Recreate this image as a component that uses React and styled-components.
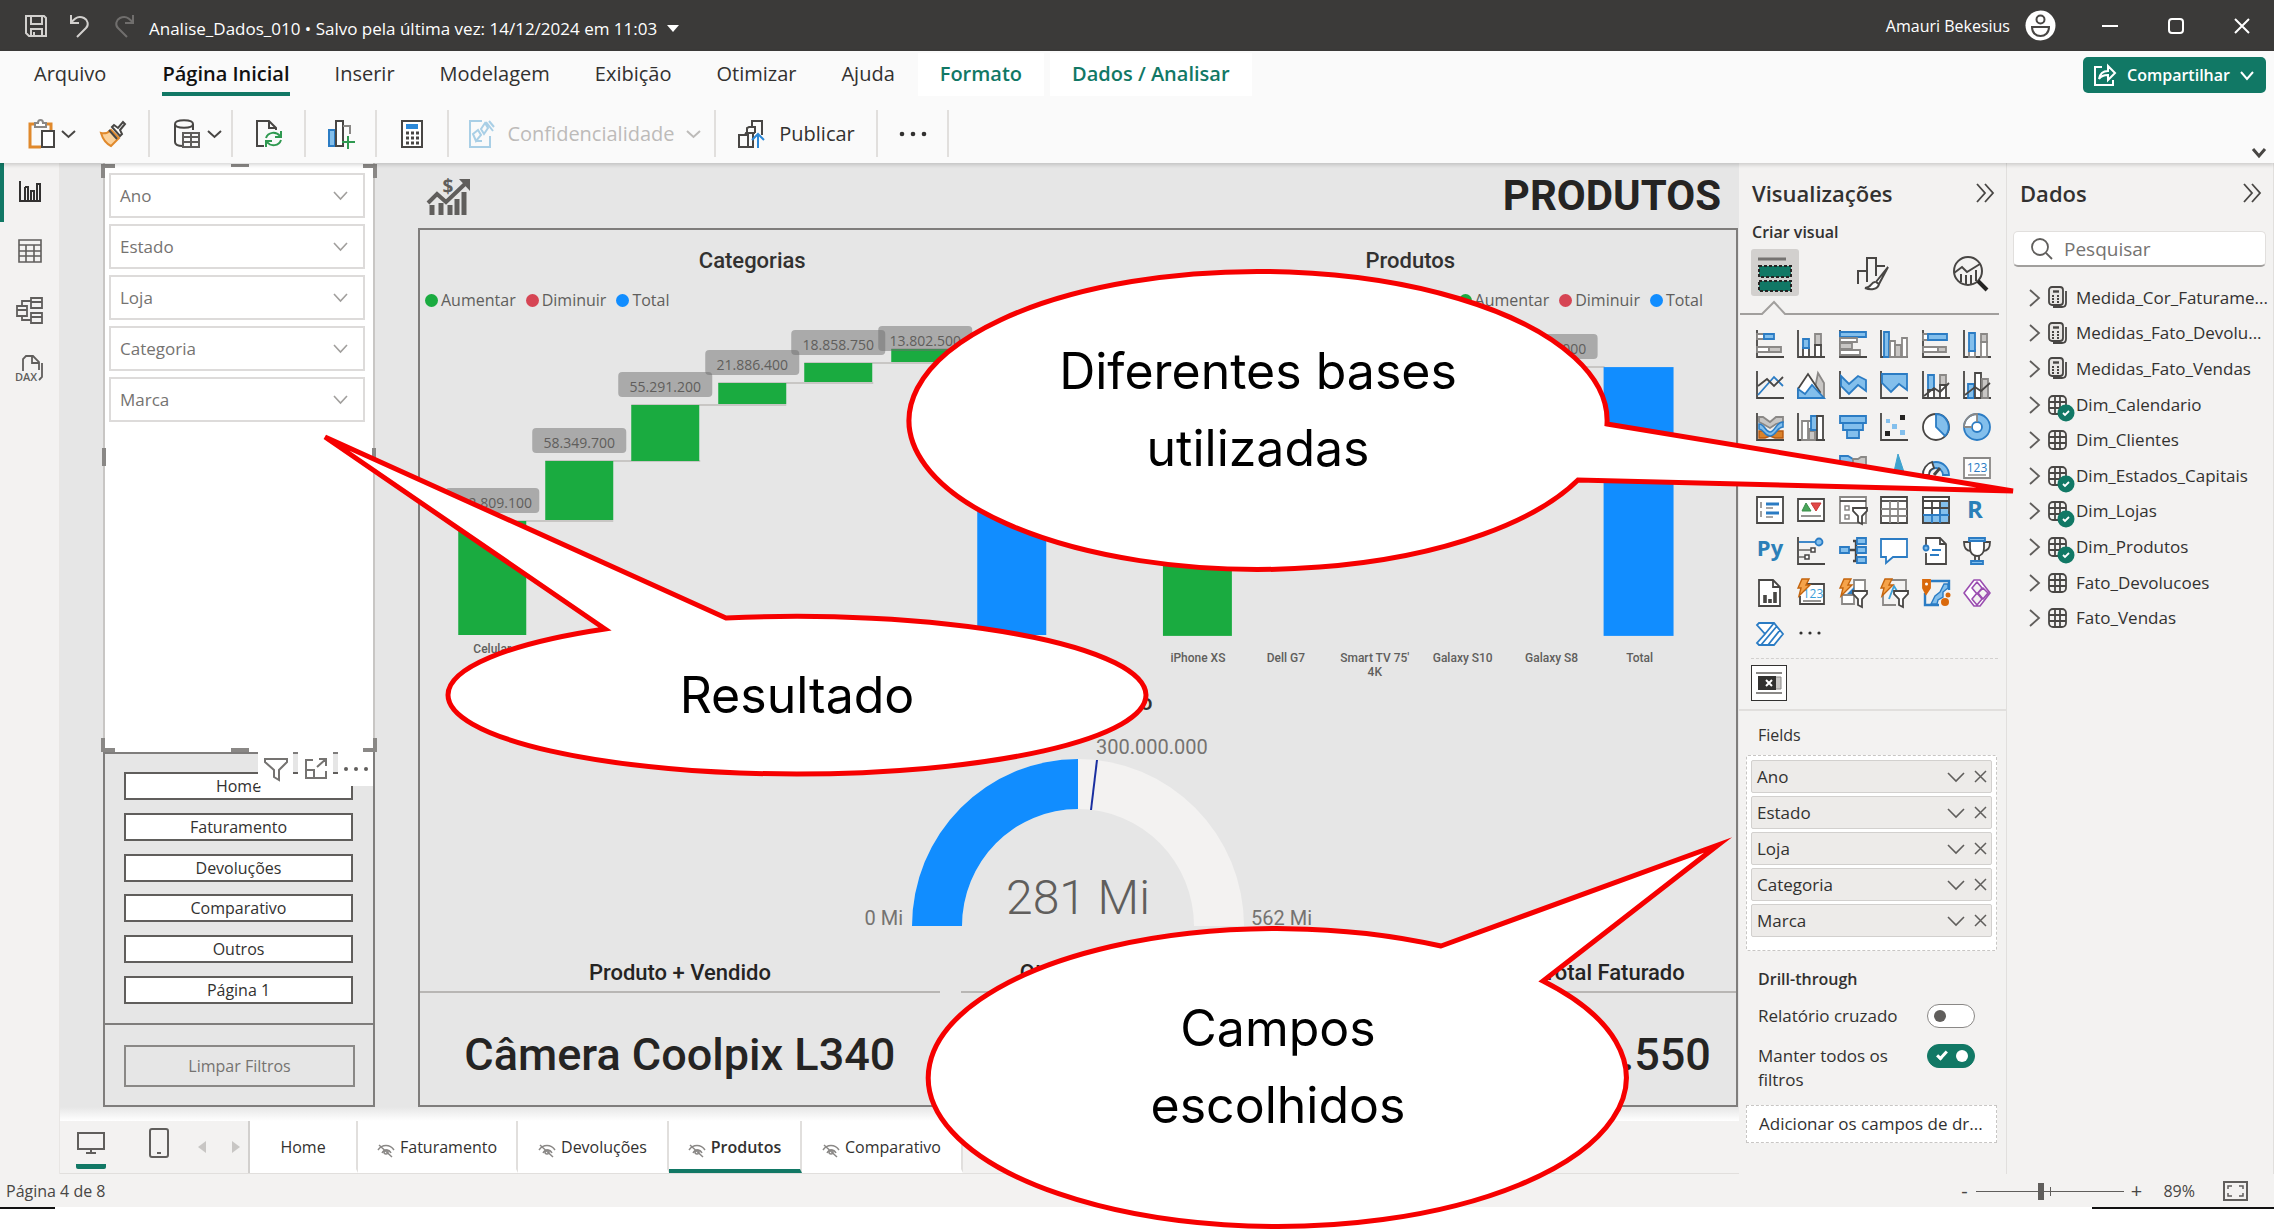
import React from 'react';
import styled, { createGlobalStyle, css } from 'styled-components';

const GlobalStyle = createGlobalStyle`
  *, *::before, *::after {
    box-sizing: border-box;
  }
  body {
    margin: 0;
    background: #fff;
    color: #323130;
    font-family: 'Open Sans', 'Noto Sans', sans-serif;
    font-size: 16px;
    line-height: 24px;
  }
  button, input {
    font: inherit;
    color: inherit;
  }
  button {
    padding: 0;
    border: 0;
    background: none;
  }
  svg {
    display: block;
    flex: none;
    overflow: visible;
  }
`;

const green = '#117865';
const din = "Roboto, 'Open Sans', sans-serif";

/* ---------- shell ---------- */
const Page = styled.div`
  position: relative;
  display: flex;
  flex-direction: column;
  overflow: hidden;
  padding-bottom: 23px;
`;
const TitleBar = styled.header`
  display: flex;
  align-items: center;
  height: 51px;
  padding: 0 24px;
  background: #3b3a39;
  color: #fff;
  font-size: 16px;
`;
const QuickButton = styled.button`
  display: flex;
  margin-right: 20px;
  opacity: ${({ dim }) => (dim ? 0.35 : 1)};
`;
const FileName = styled.button`
  display: flex;
  align-items: center;
  gap: 10px;
  margin-left: -7px;
  padding-top: 6px;
  font-size: 17px;
`;
const UserName = styled.span`
  margin-left: auto;
`;
const Avatar = styled.button`
  display: flex;
  margin: 0 46px 0 15px;
`;
const WindowButton = styled.button`
  display: flex;
  margin-left: ${({ first }) => (first ? 0 : 50)}px;
`;

/* ---------- ribbon ---------- */
const Ribbon = styled.div`
  position: relative;
  z-index: 1;
  background: #fafafa;
  box-shadow: 0 2px 4px rgba(0, 0, 0, 0.16);
  height: 112px;
`;
const TabRow = styled.nav`
  display: flex;
  align-items: flex-start;
  padding: 2px 8px 0 12px;
`;
const RibbonTab = styled.button`
  height: 43px;
  margin-right: ${({ context }) => (context ? 6 : 1)}px;
  padding: 0 22px;
  font-size: 20px;
  ${({ context }) =>
    context &&
    css`
      background: #fff;
      color: ${green};
      font-weight: 600;
    `}
  ${({ active }) =>
    active &&
    css`
      color: #111;
      font-weight: 600;
    `}
  &:first-child {
    margin-right: 12px;
  }
  span {
    display: block;
    height: 43px;
    line-height: 42px;
    border-bottom: 4px solid ${({ active }) => (active ? green : 'transparent')};
  }
`;
const ShareButton = styled.button`
  display: flex;
  align-items: center;
  justify-content: space-between;
  width: 183px;
  height: 36px;
  margin: 4px 0 0 auto;
  padding: 0 12px 0 10px;
  border-radius: 5px;
  background: ${green};
  color: #fff;
  font-weight: 600;
  font-size: 16px;
`;
const ToolRow = styled.div`
  display: flex;
  align-items: center;
  height: 47px;
  margin-top: 14px;
`;
const ToolGroup = styled.div`
  display: flex;
  align-items: center;
  justify-content: center;
  gap: ${({ gap }) => gap || 6}px;
  width: ${({ w }) => w}px;
  height: 47px;
  padding-left: ${({ pad }) => pad || 0}px;
  border-right: 2px solid #e1dfdd;
`;
const ToolButton = styled.button`
  display: flex;
  align-items: center;
  gap: ${({ gap }) => gap || 6}px;
  font-size: 20px;
  &:disabled {
    color: #bdbbb9;
  }
`;
const Collapse = styled.button`
  margin: 38px 8px 0 auto;
`;

/* ---------- body ---------- */
const Body = styled.div`
  display: flex;
`;
const Rail = styled.nav`
  width: 60px;
  background: #f3f2f1;
  border-right: 1px solid #e8e6e4;
`;
const RailButton = styled.button`
  display: flex;
  align-items: center;
  justify-content: center;
  width: 100%;
  height: 59px;
  padding: 0 4px 2px 0;
  border-left: 4px solid ${({ active }) => (active ? green : 'transparent')};
`;
const Center = styled.main`
  flex: 1;
  min-width: 0;
  display: flex;
  flex-direction: column;
`;
const Report = styled.div`
  flex: 1;
  display: flex;
  gap: 43px;
  padding: 0 1px 14px 43px;
  background: linear-gradient(#e6e6e6 calc(100% - 14px), #fff);
`;
const Side = styled.aside`
  display: flex;
  flex-direction: column;
  width: 272px;
`;
const SlicerPanel = styled.section`
  position: relative;
  display: flex;
  flex-direction: column;
  gap: 6px;
  height: 589px;
  padding: 10px 8px 0 4px;
  background: #fff;
  border: solid #c8c6c4;
  border-width: 0 2px;
`;
const Slicer = styled.button`
  display: flex;
  align-items: center;
  justify-content: space-between;
  height: 45px;
  padding: 0 15px 0 9px;
  border: 2px solid #dddbda;
  color: #757371;
  font-size: 17px;
`;
const Handle = styled.i`
  position: absolute;
  background: #8a8886;
  width: ${({ w }) => w}px;
  height: ${({ h }) => h}px;
  ${({ at }) => at}
`;
const Corner = styled.i`
  position: absolute;
  width: 14px;
  height: 14px;
  border: 0 solid #8a8886;
  ${({ top }) => (top ? 'top: 1px; border-top-width: 4px;' : 'bottom: 0; border-bottom-width: 4px;')}
  ${({ left }) => (left ? 'left: -4px; border-left-width: 4px;' : 'right: -4px; border-right-width: 4px;')}
`;
const VisualHeader = styled.div`
  position: absolute;
  z-index: 1;
  right: 0;
  bottom: -34px;
  display: flex;
  gap: 5px;
`;
const HeaderButton = styled.button`
  display: flex;
  align-items: center;
  justify-content: center;
  width: 35px;
  height: 34px;
  background: #fff;
`;
const NavPanel = styled.section`
  flex: 1;
  display: flex;
  flex-direction: column;
  justify-content: space-between;
  padding: 18px 20px 19px 19px;
  border: 2px solid #7f7d7c;
`;
const NavButton = styled.button`
  height: 28px;
  border: 2px solid #605e5c;
  background: #fff;
  line-height: 22px;
`;
const ClearPanel = styled.section`
  display: grid;
  padding: 20px 18px 18px 19px;
  border: 2px solid #7f7d7c;
  border-top: 0;
`;
const ClearButton = styled.button`
  height: 42px;
  border: 2px solid #8a8886;
  color: #757371;
`;

const Board = styled.div`
  flex: 1;
  min-width: 0;
  display: flex;
  flex-direction: column;
`;
const BoardHead = styled.div`
  display: flex;
  align-items: center;
  justify-content: space-between;
  height: 65px;
  padding: 0 17px 0 8px;
`;
const BoardTitle = styled.h1`
  margin: 0;
  color: #252423;
  font: 700 42px/60px ${din};
`;
const Frame = styled.div`
  flex: 1;
  border: 2px solid #7f7d7c;
`;
const Charts = styled.div`
  display: grid;
  grid-template-columns: 51fr 50fr;
`;
const ChartTitle = styled.h2`
  margin: 0;
  color: #323130;
  text-align: center;
  font: 500 22px/24px ${din};
`;
const Chart = styled.section`
  padding-top: 19px;
`;
const Legend = styled.ul`
  display: flex;
  justify-content: ${({ end }) => (end ? 'flex-end' : 'flex-start')};
  gap: 10px;
  margin: 15px 0 0;
  padding: 0 ${({ end }) => (end ? 33 : 5)}px;
  list-style: none;
  color: #605e5c;
`;
const LegendItem = styled.li`
  display: flex;
  align-items: center;
  gap: 3px;
  &::before {
    content: '';
    width: 13px;
    height: 13px;
    border-radius: 50%;
    background: ${({ color }) => color};
  }
`;
const ChartSvg = styled.svg`
  width: 100%;
  height: 368px;
  text {
    font-family: 'Open Sans', sans-serif;
    font-size: 14px;
    fill: #605e5c;
    text-anchor: middle;
  }
  .axis {
    font: 500 12px ${din};
  }
`;
const GaugeBox = styled.section`
  padding-top: 11px;
`;
const GaugeSvg = styled.svg`
  margin: 5px auto 0;
  text {
    font: 400 20px ${din};
    fill: #757371;
  }
  .value {
    font: 300 48px ${din};
    fill: #605e5c;
    text-anchor: middle;
  }
`;
const Cards = styled.div`
  display: grid;
  grid-template-columns: 521fr 245fr 245fr 245fr;
  gap: 21px;
  margin-top: 25px;
`;
const CardTitle = styled.h2`
  margin: 0;
  padding-bottom: 6px;
  border-bottom: 2px solid #b8b6b4;
  color: #252423;
  text-align: center;
  font: 500 22px/24px ${din};
`;
const CardValue = styled.p`
  margin: 0;
  padding: 32px 0 20px;
  color: #252423;
  text-align: center;
  white-space: nowrap;
  font: 500 45px/60px ${din};
`;

/* ---------- page tabs ---------- */
const PageTabs = styled.nav`
  display: flex;
  height: 53px;
  background: #f3f2f1;
  border-bottom: 1px solid #e1dfdd;
`;
const Devices = styled.div`
  display: flex;
  align-items: center;
  width: 190px;
  padding-left: 16px;
  border-right: 2px solid #d2d0ce;
`;
const Device = styled.button`
  display: flex;
  align-items: center;
  justify-content: center;
  width: 35px;
  height: 43px;
  margin-right: ${({ active }) => (active ? 43 : 29)}px;
  padding-bottom: 3px;
  border-bottom: 5px solid ${({ active }) => (active ? green : 'transparent')};
  border-radius: 2px;
`;
const Arrow = styled.button`
  width: 8px;
  margin-right: 26px;
`;
const PageTab = styled.button`
  display: flex;
  align-items: center;
  justify-content: center;
  gap: 5px;
  width: ${({ w }) => w}px;
  padding-top: 4px;
  background: #fff;
  border-right: 2px solid #e1dfdd;
  border-bottom: 4px solid ${({ active }) => (active ? green : '#fff')};
  font-weight: ${({ active }) => (active ? 600 : 400)};
  svg {
    margin-top: 8px;
  }
`;

/* ---------- panes ---------- */
const Pane = styled.aside`
  width: ${({ w }) => w}px;
  background: #f3f2f1;
  border-right: 1px solid #e1dfdd;
  font-size: 17px;
`;
const PaneHead = styled.div`
  display: flex;
  align-items: center;
  justify-content: space-between;
  height: 60px;
  padding: 0 11px 0 13px;
`;
const PaneTitle = styled.h2`
  margin: 0;
  font-size: 22px;
  font-weight: 600;
  line-height: 28px;
`;
const Subtitle = styled.h3`
  margin: ${({ drill }) => (drill ? '16px 0 0 19px' : '-3px 0 0 13px')};
  font-size: 16px;
  font-weight: 600;
  line-height: 24px;
`;
const Modes = styled.div`
  display: flex;
  justify-content: space-between;
  padding: 5px 11px 0 12px;
`;
const Mode = styled.button`
  display: flex;
  align-items: center;
  justify-content: center;
  width: 48px;
  height: 47px;
  border-radius: 3px;
  background: ${({ active }) => (active ? '#d2d0ce' : 'none')};
`;
const Notch = styled.svg`
  margin-top: 5px;
`;
const VisualGrid = styled.div`
  display: grid;
  grid-template-columns: repeat(6, 28px);
  justify-content: space-between;
  align-content: space-between;
  height: 318px;
  margin: 15px 15px 0 17px;
`;
const VisualButton = styled.button`
  width: 28px;
  height: 28px;
`;
const Custom = styled.div`
  margin-top: 10px;
  padding: 7px 0 8px 12px;
  border-bottom: 2px solid #e1dfdd;
  &::before {
    content: '';
    display: block;
    margin: -7px 8px 6px 0;
    border-top: 1px dashed #d2d0ce;
  }
`;
const CustomButton = styled.button`
  display: flex;
  align-items: center;
  justify-content: center;
  width: 36px;
  height: 36px;
  border: 1px solid #323130;
  background: #fff;
`;
const FieldsTitle = styled.h3`
  margin: 12px 0 8px 19px;
  font-size: 16px;
  font-weight: 400;
`;
const Well = styled.div`
  display: flex;
  flex-direction: column;
  gap: 3px;
  margin: 0 9px 0 7px;
  padding: 4px 4px 13px;
  border: 1px dashed #c8c6c4;
  border-radius: 2px;
  background: #fff;
`;
const Field = styled.div`
  display: flex;
  align-items: center;
  gap: 9px;
  height: 33px;
  padding: 0 4px 0 5px;
  border: 1px solid #d2d0ce;
  border-radius: 2px;
  background: #edebe9;
  span {
    flex: 1;
  }
`;
const SwitchRow = styled.label`
  display: flex;
  align-items: flex-start;
  justify-content: space-between;
  padding: ${({ first }) => (first ? 13 : 16)}px 31px 0 19px;
  span {
    width: 150px;
    white-space: ${({ first }) => (first ? 'nowrap' : 'normal')};
  }
`;
const Switch = styled.input`
  appearance: none;
  position: relative;
  width: 48px;
  height: 24px;
  margin: 0;
  border: 1px solid #8a8886;
  border-radius: 12px;
  background: #fff;
  &::before {
    content: '';
    position: absolute;
    top: 5px;
    left: 6px;
    width: 12px;
    height: 12px;
    border-radius: 50%;
    background: #605e5c;
  }
  &:checked {
    border-color: ${green};
    background: ${green};
  }
  &:checked::before {
    left: 28px;
    background: #fff;
  }
  &:checked::after {
    content: '';
    position: absolute;
    top: 4px;
    left: 11px;
    width: 6px;
    height: 11px;
    border: solid #fff;
    border-width: 0 3px 3px 0;
    transform: rotate(42deg);
  }
`;
const DropHere = styled.div`
  margin: 13px 9px 30px 7px;
  padding: 6px 12px;
  border: 1px dashed #c8c6c4;
  background: #fff;
  white-space: nowrap;
`;
const Search = styled.label`
  display: flex;
  align-items: center;
  gap: 9px;
  height: 36px;
  margin: 8px 7px 0 6px;
  padding-left: 17px;
  border: 1px solid #e1dfdd;
  border-bottom: 2px solid #a19f9d;
  border-radius: 5px;
  background: #fff;
  input {
    width: 100%;
    min-width: 0;
    border: 0;
    outline: 0;
    background: none;
    font-size: 19px;
  }
  input::placeholder {
    color: #757371;
    opacity: 1;
  }
`;
const Tables = styled.ul`
  display: flex;
  flex-direction: column;
  height: 356px;
  margin: 13px 0 0;
  padding: 0 0 0 22px;
  list-style: none;
`;
const TableItem = styled.li`
  flex: 1;
  display: flex;
`;
const TableButton = styled.button`
  display: flex;
  align-items: center;
  gap: 8px;
  width: 100%;
  text-align: left;
  white-space: nowrap;
`;

/* ---------- status ---------- */
const Status = styled.footer`
  display: flex;
  align-items: center;
  height: 33px;
  padding: 1px 26px 0 6px;
  background: #f3f2f1;
  color: #484644;
`;
const Zoom = styled.div`
  display: flex;
  align-items: center;
  gap: 6px;
  margin-left: auto;
  font-size: 16px;
`;
const Slider = styled.input`
  appearance: none;
  width: 148px;
  height: 18px;
  margin: 0;
  background: linear-gradient(#605e5c, #605e5c) center / 100% 1px no-repeat,
    linear-gradient(#605e5c, #605e5c) center / 1px 9px no-repeat;
  &::-webkit-slider-thumb {
    appearance: none;
    width: 6px;
    height: 17px;
    background: #605e5c;
  }
`;
const SignButton = styled.button`
  width: 12px;
  font-size: 20px;
  line-height: 20px;
`;
const Percent = styled.output`
  margin: 0 22px 0 15px;
`;
const Edge = styled.div`
  display: flex;
  justify-content: space-between;
  &::before,
  &::after {
    content: '';
    width: 55px;
    height: 2px;
    background: #111;
  }
  &::after {
    width: 182px;
  }
`;

/* ---------- callouts ---------- */
const CalloutBox = styled.div`
  position: absolute;
  z-index: 2;
  left: ${({ x }) => x}px;
  top: ${({ y }) => y}px;
  width: 698px;
  height: ${({ h }) => h}px;
  display: flex;
  align-items: center;
  justify-content: center;
  padding: ${({ tall }) => (tall ? '0 140px 22px' : '0')};
  text-align: center;
  color: #000;
  font: 400 50px/77px Inter, 'Open Sans', sans-serif;
  svg {
    position: absolute;
    inset: 0;
  }
  p {
    position: relative;
    margin: 0;
  }
`;

const Callout = ({ x, y, h, d, tall, children }) => (
  <CalloutBox x={x} y={y} h={h} tall={tall}>
    <svg width="698" height={h}>
      <path d={d} fill="#fff" stroke="#f60000" strokeWidth="5" strokeMiterlimit="8" />
    </svg>
    <p>{children}</p>
  </CalloutBox>
);

/* ---------- icons ---------- */
const Svg = ({ s = 28, w, h, box, children, ...rest }) => (
  <svg
    width={w || s}
    height={h || s}
    viewBox={box || `0 0 ${w || s} ${h || s}`}
    fill="none"
    stroke="#484644"
    strokeWidth="2"
    aria-hidden="true"
    {...rest}
  >
    {children}
  </svg>
);
const Chevron = ({ w = 15, h = 8, ...rest }) => (
  <Svg w={w} h={h} {...rest}>
    <path d={`M1 1L${w / 2} ${h - 1}L${w - 1} 1`} />
  </Svg>
);
const Chevrons = () => (
  <Svg w={20} h={20} strokeWidth="1.8">
    <path d="M2 1l8 9-8 9M10 1l8 9-8 9" />
  </Svg>
);
const Cross = () => (
  <Svg s={13} strokeWidth="1.5" stroke="#605e5c">
    <path d="M1 1l11 11M12 1L1 12" />
  </Svg>
);
const K = '#484644';
const B = '#2b7cc4';
const F = '#83bfec';
const G = '#c8c6c4';
const P = '#8a8886';
const O = '#d9822b';
const Axis = () => <path d="M1 0v27h27" />;
const Bolt = () => <path d="M5 0h7L9 6h4L2 17l2-8H1z" fill="#f5a34a" stroke="#c4640c" strokeWidth="1.4" />;
const Funnel = () => <path d="M14 12h14v3l-5 5v8l-4-2v-6l-5-5z" fill="#fff" stroke={K} strokeWidth="1.8" />;

const visuals = [
  ['Barras empilhadas', <><Axis /><path d="M1 4h7v5H1zM1 17h12v5H1z" fill="#fff" stroke={P} /><path d="M8 4h10v5H8z" fill={F} stroke={B} /><path d="M13 17h12v5H13z" fill={G} stroke={P} /></>],
  ['Colunas empilhadas', <><Axis /><path d="M6 18h6v9H6z" fill="#fff" /><path d="M6 9h6v9H6z" fill={F} stroke={B} /><path d="M18 4h6v11h-6z" fill={G} stroke={P} /><path d="M18 15h6v12h-6z" fill="#fff" /></>],
  ['Barras clusterizadas', <><Axis /><path d="M1 2h26v5H1z" fill={F} stroke={B} /><path d="M1 8h17v4H1zM1 20h20v5H1z" fill="#fff" stroke={P} /><path d="M1 13h12v6H1z" fill={G} stroke={P} /></>],
  ['Colunas clusterizadas', <><Axis /><path d="M4 2h5v25H4z" fill={F} stroke={B} /><path d="M10 11h5v16h-5zM22 8h5v19h-5z" fill="#fff" stroke={P} /><path d="M15 15h6v12h-6z" fill={G} stroke={P} /></>],
  ['Barras 100%', <><Axis /><path d="M1 4h5v6H1zM1 17h15v5H1z" fill="#fff" stroke={P} /><path d="M6 4h19v6H6z" fill={F} stroke={B} /><path d="M16 17h8v5h-8z" fill={G} stroke={P} /></>],
  ['Colunas 100%', <><Axis /><path d="M6 20h6v7H6zM18 12h6v15h-6z" fill="#fff" stroke={P} /><path d="M6 3h6v18H6z" fill={F} stroke={B} /><path d="M18 4h6v8h-6z" fill={G} stroke={P} /></>],
  ['Linhas', <><Axis /><path d="M2 24L18 6l9 9" stroke={B} /><path d="M2 15l9-7 7 7 9-9" /></>],
  ['Área', <><path d="M21 2l6 10v15H16z" fill={G} stroke={P} /><path d="M1 18L11 3l12 18-8 6H1z" fill="#fff" /><path d="M1 27V18l7 5 7-9 12 13z" fill={F} stroke={B} /></>],
  ['Área empilhada', <><Axis /><path d="M2 5l8 8 9-8 8 4v11l-8-6-9 9-8-8z" fill={F} stroke={B} /></>],
  ['Área 100%', <><Axis /><path d="M2 3h25v16l-8-6-8 8-9-9z" fill={F} stroke={B} /></>],
  ['Linhas e colunas empilhadas', <><Axis /><path d="M6 4h6v15H6z" fill={F} stroke={B} /><path d="M18 4h6v10h-6z" fill={G} stroke={P} /><path d="M6 19h6v8H6zM18 14h6v13h-6z" fill="#fff" /><path d="M2 25l10-8 6 4 9-9" /></>],
  ['Linhas e colunas clusterizadas', <><Axis /><path d="M5 13h6v14H5z" fill={F} stroke={B} /><path d="M12 2h6v25h-6z" fill="#fff" /><path d="M19 8h6v19h-6z" fill={G} stroke={P} /><path d="M2 24l10-8 6 4 9-8" /></>],
  ['Faixas', <><Axis /><path d="M3 4h4l7 5 6-5h7v5l-7 2-6 4-7-4-4-2z" fill={G} stroke={P} /><path d="M3 18h6l5 3 5-3h8v7h-8l-5-2-5 2H3z" fill={O} stroke="#b8590f" strokeWidth="1.4" /><path d="M3 11c6 0 6 8 11 8s6-10 13-10v5c-6 0-7 9-13 9S8 16 3 16z" fill={F} stroke={B} strokeWidth="1.6" /></>],
  ['Cascata', <><Axis /><path d="M5 8h6v19H5zM11 8h6v8h-6z" fill="#fff" stroke={P} /><path d="M12 18h6v9h-6z" fill={G} stroke={P} /><path d="M14 3h7v14h-7z" fill={F} stroke={B} /><path d="M20 3h6v24h-6z" fill="#fff" /></>],
  ['Funil', <path d="M1 3h26v7H1zM4 10h20v7H4zM8 17h12v8H8z" fill={F} stroke={B} />],
  ['Dispersão', <><Axis /><g stroke="none"><path d="M20 2h5v5h-5zM5 18h5v5H5z" fill="#252423" /><path d="M6 6h4v4H6zM12 11h5v5h-5zM20 17h5v5h-5z" fill={F} /></g></>],
  ['Pizza', <><circle cx="14" cy="14" r="13" fill="#fff" /><path d="M14 1a13 13 0 0 1 9 22l-9-9z" fill={F} stroke={B} /></>],
  ['Rosca', <><circle cx="14" cy="14" r="9" stroke={F} strokeWidth="8" /><path d="M14 5a9 9 0 0 0-9 9" stroke="#fff" strokeWidth="8" /><circle cx="14" cy="14" r="13" stroke={B} /><circle cx="14" cy="14" r="5" stroke={B} fill="#fff" /><path d="M1 14A13 13 0 0 1 14 1v8M1 14h8" stroke={P} /></>],
  ['Treemap', <path d="M1 3h26v22H1zM14 3v22" fill={F} stroke={B} />],
  ['Mapa', <><circle cx="14" cy="16" r="10" fill={F} stroke={B} /><path d="M4 16h20M14 6v20" stroke={B} /></>],
  ['Mapa coroplético', <><path d="M1 2h8l5 3v20H1z" fill={F} stroke={B} /><path d="M14 5h5l3-2h5v22H14z" fill={G} stroke={P} /></>],
  ['Mapa do Azure', <path d="M18 0l9 27-14-5z" fill="#3fa3cf" stroke="#3fa3cf" strokeWidth="1" />],
  ['Indicador', <><path d="M1 21a13 13 0 0 1 26 0h-6a7 7 0 0 0-14 0z" fill={F} stroke={B} /><path d="M1 21A13 13 0 0 1 10 8l2 6a7 7 0 0 0-5 7z" fill="#fff" /><path d="M12 21l6-7" strokeWidth="3" /></>],
  ['Cartão', <><path d="M1 4h26v20H1z" fill="#fff" stroke={P} /><path d="M5 21h18" stroke={P} strokeWidth="1.4" /><text x="14" y="18" fontSize="12" fill={B} stroke="none" textAnchor="middle">123</text></>],
  ['Cartão de várias linhas', <><path d="M1 1h26v26H1z" fill="#fff" /><path d="M10 8h13M10 17h13" stroke={B} strokeWidth="3" /><path d="M5 6v6M5 15v6M10 12h7M10 21h7" stroke={P} strokeWidth="1.6" /></>],
  ['KPI', <><path d="M1 3h26v22H1z" fill="#fff" /><path d="M5 15l4-8 5 8z" fill="#4aa55b" stroke="#3a8f4a" strokeWidth="1" /><path d="M14 7h10l-5 8z" fill="#e04848" stroke="#c93636" strokeWidth="1" /><path d="M4 20h20" stroke={P} /></>],
  ['Segmentação de dados', <><path d="M1 1h26v26H1z" fill="#fff" stroke={P} /><path d="M1 5h26" /><path d="M6 10h4v4H6zM6 19h4v4H6z" stroke={P} strokeWidth="1.5" /><Funnel /></>],
  ['Tabela', <><path d="M1 1h26v26H1z" fill="#fff" /><path d="M1 5h26" /><path d="M10 5v22M18 5v22M1 13h26M1 20h26" stroke={P} /></>],
  ['Matriz', <><path d="M1 1h26v26H1z" fill="#fff" /><path d="M18 6h9v21H1v-8h17z" fill={F} stroke="none" /><path d="M1 5h26M1 1h26v26H1zM10 5v14M18 5v14M1 12h26" /><path d="M10 20v7M18 13v14M1 19h26" stroke={B} /></>],
  ['Visual de script R', <text x="12" y="22" fontSize="24" fontWeight="700" fill="#2b7fb8" stroke="none" textAnchor="middle">R</text>],
  ['Visual de Python', <text x="14" y="19" fontSize="22" fontWeight="700" fill="#2b7fb8" stroke="none" textAnchor="middle">Py</text>],
  ['Principais influenciadores', <><Axis /><path d="M2 5h17" stroke={B} /><circle cx="22" cy="5" r="3.5" fill={F} stroke={B} /><path d="M2 13h12M2 20h7" stroke={P} /><path d="M14 11h4v4h-4zM8 18h4v4H8z" fill="#fff" strokeWidth="1.5" /></>],
  ['Árvore de decomposição', <><path d="M10 13h7M17 4v20M14 4h4M14 24h4" strokeWidth="2.4" /><path d="M1 10h9v6H1zM18 1h9v6h-9zM18 10h9v6h-9zM18 20h9v6h-9z" fill={F} stroke={B} /></>],
  ['P e R', <path d="M1 2h26v18H13l-7 6v-6H1z" fill="#fff" stroke={B} />],
  ['Narrativa', <><path d="M4 8V1h14l6 6v20H4V16" fill="#fff" /><path d="M18 1v6h6" /><circle cx="4" cy="11" r="2.5" stroke={B} fill={F} /><path d="M10 13h9M8 18h9" stroke={B} /></>],
  ['Metas', <><path d="M7 1h14v10c0 5-3 8-7 8s-7-3-7-8z" fill="#fff" /><path d="M7 5H1c0 6 2 9 7 9M21 5h6c0 6-2 9-7 9M12 19v5M16 19v5" /><path d="M6 1h16v3H6zM8 24h12v3H8z" fill={F} stroke={B} /></>],
  ['Relatório paginado', <><path d="M3 1h14l7 7v19H3z" fill="#fff" /><path d="M17 1v7h7" /><path d="M9 24v-8M14 24v-4M19 24V13" strokeWidth="3.6" /></>],
  ['Cartão novo', <><path d="M5 5h22v20H3v-8" fill="#fff" stroke={K} /><text x="16" y="19" fontSize="12" fill="#3ba0da" stroke="none" textAnchor="middle">123</text><path d="M6 22h18" stroke={P} /><Bolt /></>],
  ['Segmentação de botão', <><path d="M15 1h11v11H15zM3 16h12v9H3z" fill="#fff" stroke={P} /><path d="M8 15l7-7v7z" fill={B} stroke="none" /><Funnel /><Bolt /></>],
  ['Segmentação de texto', <><path d="M12 1h14v10M3 15v11h13" stroke={P} /><path d="M9 20l5-13 6 10" stroke="#3ba0da" /><Funnel /><Bolt /></>],
  ['ArcGIS', <><path d="M9 2h18v9M3 14v12h14" stroke={B} strokeWidth="2.4" /><path d="M22 5h4v4l-5 4v5l-5 3-1 4H9l4-8 5-4z" fill={F} stroke={B} strokeWidth="1.4" /><path d="M1 1h7v8l-4 6-3-6z" fill="#d9690c" stroke="#d9690c" /><circle cx="4.5" cy="5" r="1.5" fill="#fff" stroke="none" /><circle cx="23" cy="23" r="4" fill="#d9690c" stroke="none" /><circle cx="26" cy="16" r="2.5" fill="#d9690c" stroke="none" /></>],
  ['Power Apps', <path d="M11 1h6l10 13-10 13h-6L1 14zM14 3l-5 6 5 6 5-6zM14 14l-5 6 5 6 5-6zM20 9l-5 5 5 6 5-6z" stroke="#9a4db0" strokeWidth="1.6" fill="#fff" strokeLinejoin="round" />],
  ['Power Automate', <path d="M3 3h15l9 11-9 11H3l-2-2 8-9-8-9zM9 14l9-11M5 25L21 6M12 25L24 10" stroke={B} fill="#fff" />],
  ['Obter mais visuais', <g fill="#323130" stroke="none"><circle cx="4" cy="13" r="1.6" /><circle cx="13" cy="13" r="1.6" /><circle cx="22" cy="13" r="1.6" /></g>],
];

const CalcIcon = () => (
  <Svg w={20} h={23} strokeWidth="1.8">
    <path d="M5 21h9c3 0 4-1 4-4V5" />
    <rect x="1" y="1" width="14" height="18" rx="3" fill="#e8e6e4" />
    <path d="M5 5.5h6" strokeWidth="2.4" />
    <path d="M4 10h2M9 10h2M4 13h2M9 13h2M4 16h2M9 16h2" />
  </Svg>
);
const TableIcon = ({ checked }) => (
  <Svg w={20} h={20} strokeWidth="1.8">
    <rect x="1" y="1" width="17" height="18" rx="4" />
    <path d="M1 7h17M1 13h17M7 1v18M12 1v18" />
    {checked && (
      <g>
        <circle cx="18" cy="18" r="8.5" fill={green} stroke="none" />
        <path d="M15 18l2 2 4-4" stroke="#fff" />
      </g>
    )}
  </Svg>
);
const HiddenIcon = () => (
  <Svg w={18} h={14} stroke="#8a8886" strokeWidth="1.5">
    <path d="M1 6c4-6 12-6 16 0M5 9c2-4 7-4 9 0M2 1l13 12" />
    <circle cx="9" cy="8" r="2" />
  </Svg>
);

/* ---------- data ---------- */
const ribbonTabs = ['Arquivo', 'Página Inicial', 'Inserir', 'Modelagem', 'Exibição', 'Otimizar', 'Ajuda'];
const slicers = ['Ano', 'Estado', 'Loja', 'Categoria', 'Marca'];
const navItems = ['Home', 'Faturamento', 'Devoluções', 'Comparativo', 'Outros', 'Página 1'];
const tables = [
  { name: 'Medida_Cor_Faturame...', measure: true },
  { name: 'Medidas_Fato_Devolu...', measure: true },
  { name: 'Medidas_Fato_Vendas', measure: true },
  { name: 'Dim_Calendario', checked: true },
  { name: 'Dim_Clientes' },
  { name: 'Dim_Estados_Capitais', checked: true },
  { name: 'Dim_Lojas', checked: true },
  { name: 'Dim_Produtos', checked: true },
  { name: 'Fato_Devolucoes' },
  { name: 'Fato_Vendas' },
];
const pageTabs = [
  { name: 'Home', w: 108 },
  { name: 'Faturamento', w: 160, hidden: true },
  { name: 'Devoluções', w: 151, hidden: true },
  { name: 'Produtos', w: 133, hidden: true, active: true },
  { name: 'Comparativo', w: 161, hidden: true },
];
const categorias = [
  ['112.809.100', 209, 323],
  ['58.349.700', 149, 208],
  ['55.291.200', 93, 149],
  ['21.886.400', 71, 92],
  ['18.858.750', 51, 70],
  ['13.802.500', 37, 50],
];
const produtos = ['iPhone XS', 'Dell G7', "Smart TV 75'", 'Galaxy S10', 'Galaxy S8', 'Total'];

const ChartLegend = ({ end }) => (
  <Legend end={end}>
    <LegendItem color="#1aab40">Aumentar</LegendItem>
    <LegendItem color="#d64554">Diminuir</LegendItem>
    <LegendItem color="#118dff">Total</LegendItem>
  </Legend>
);

const CategoriasChart = () => (
  <ChartSvg viewBox="0 0 664 368">
    {categorias.map(([label, top, bottom], i) => {
      const x = 38 + Math.round(i * 86.5);
      return (
        <g key={label}>
          <path d={`M${x} ${top}h155`} stroke="#c8c6c4" strokeWidth="2" />
          <rect x={x} y={top} width="68" height={bottom - top} fill="#1aab40" />
        </g>
      );
    })}
    <rect x="557" y="37" width="69" height="286" fill="#118dff" />
    {categorias.map(([label, top], i) => {
      const x = 38 + Math.round(i * 86.5);
      const y = Math.max(top - 33, 14);
      return (
        <g key={label}>
          <rect x={x - 13} y={y} width="94" height="25" rx="4" fill="#6e6e6e" fillOpacity="0.5" />
          <text x={x + 34} y={y + 20}>{label}</text>
        </g>
      );
    })}
    <text className="axis" x="72" y="341">Celular</text>
  </ChartSvg>
);

const ProdutosChart = () => (
  <ChartSvg viewBox="0 0 652 368">
    <rect x="78" y="174" width="69" height="150" fill="#1aab40" />
    <path d="M430 55h90" stroke="#c8c6c4" strokeWidth="2" />
    <rect x="519" y="55" width="70" height="269" fill="#118dff" />
    <rect x="419" y="22" width="94" height="25" rx="4" fill="#6e6e6e" fillOpacity="0.5" />
    <text x="466" y="42">16.317.000</text>
    {produtos.map((name, i) => (
      <text key={name} className="axis" x={113 + Math.round(i * 88.4)} y="350">{name}</text>
    ))}
    <text className="axis" x="290" y="364">4K</text>
  </ChartSvg>
);

const App = () => (
  <Page>
    <GlobalStyle />
    <TitleBar>
      <QuickButton aria-label="Salvar">
        <Svg s={24} stroke="#d2d0ce">
          <path d="M2 2h18l2 2v18H5l-3-3zM7 2v8h11V2M7 22v-7h11v7M10 18v4" />
        </Svg>
      </QuickButton>
      <QuickButton aria-label="Desfazer">
        <Svg s={24} stroke="#d2d0ce">
          <path d="M3 1v8h8M3 9c4-6 9-7 13-5s5 7 2 10l-9 9" />
        </Svg>
      </QuickButton>
      <QuickButton aria-label="Refazer" dim>
        <Svg s={24} stroke="#d2d0ce">
          <path d="M21 1v8h-8M21 9c-4-6-9-7-13-5s-5 7-2 10l9 9" />
        </Svg>
      </QuickButton>
      <FileName>
        Analise_Dados_010 • Salvo pela última vez: 14/12/2024 em 11:03
        <Svg w={12} h={8} stroke="none" fill="#fff">
          <path d="M0 0h12L6 7z" />
        </Svg>
      </FileName>
      <UserName>Amauri Bekesius</UserName>
      <Avatar aria-label="Conta">
        <Svg s={31}>
          <circle cx="15.5" cy="15.5" r="15" fill="#fff" stroke="none" />
          <circle cx="15.5" cy="9.5" r="4" />
          <path d="M7 17h17c0 6-4 9-8.5 9S7 23 7 17z" />
        </Svg>
      </Avatar>
      <WindowButton first aria-label="Minimizar">
        <Svg s={16} stroke="#fff"><path d="M0 8h16" /></Svg>
      </WindowButton>
      <WindowButton aria-label="Maximizar">
        <Svg s={16} stroke="#fff"><rect x="1" y="1" width="14" height="14" rx="3" /></Svg>
      </WindowButton>
      <WindowButton aria-label="Fechar">
        <Svg s={16} stroke="#fff"><path d="M1 1l14 14M15 1L1 15" /></Svg>
      </WindowButton>
    </TitleBar>

    <Ribbon>
      <TabRow>
        {ribbonTabs.map((name) => (
          <RibbonTab key={name} active={name === 'Página Inicial'}>
            <span>{name}</span>
          </RibbonTab>
        ))}
        <RibbonTab context><span>Formato</span></RibbonTab>
        <RibbonTab context><span>Dados / Analisar</span></RibbonTab>
        <ShareButton>
          <Svg s={24} stroke="#fff">
            <path d="M9 4H2v18h18v-5M6 16c1-6 4-8 9-8V3l7 7-7 7v-5c-4 0-7 1-9 4z" />
          </Svg>
          Compartilhar
          <Chevron w={14} h={9} stroke="#fff" />
        </ShareButton>
      </TabRow>
      <ToolRow>
        <ToolGroup w={150} gap={22} pad={6}>
          <ToolButton aria-label="Colar">
            <Svg w={27} h={30}>
              <path d="M13 28H2V5h21v6" stroke="#e0892c" strokeWidth="3" />
              <path d="M7 8V4h3c0-4 5-4 5 0h3v4z" fill="#fff" stroke={P} />
              <rect x="14" y="12" width="12" height="16" fill="#fff" />
            </Svg>
            <Chevron />
          </ToolButton>
          <ToolButton aria-label="Pincel de formatação">
            <Svg s={28}>
              <path d="M3 13c4 1 7 0 10-3l8 8-8 8C9 24 5 20 3 13z" fill="#fbd19b" stroke="#e0892c" />
              <path d="M11 10l8 9M14 7l2-2 4 3 5-6 2 2-5 6 2 4-2 2z" fill="#fff" />
            </Svg>
          </ToolButton>
        </ToolGroup>
        <ToolGroup w={83} pad={14}>
          <ToolButton aria-label="Obter dados">
            <Svg w={28} h={30}>
              <path d="M10 27c-6 0-8-2-8-4V5M20 5v6M2 5c0-5 18-5 18 0s-18 5-18 0z" />
              <path d="M10 14h16v14H10zM10 18h16M18 14v14M10 23h16" stroke="#605e5c" />
            </Svg>
            <Chevron />
          </ToolButton>
        </ToolGroup>
        <ToolGroup w={73}>
          <ToolButton aria-label="Atualizar">
            <Svg w={28} h={30}>
              <path d="M9 27H2V2h12l7 7v2M14 2v7h7" />
              <path d="M11 19c2-6 10-7 14-2M26 12v6h-6M26 21c-2 6-10 7-14 2M11 28v-6h6" stroke="#2f9950" />
            </Svg>
          </ToolButton>
        </ToolGroup>
        <ToolGroup w={71}>
          <ToolButton aria-label="Novo visual">
            <Svg w={28} h={30}>
              <path d="M2 11h6v16H2z" fill={F} stroke={B} />
              <path d="M9 2h7v25H9z" fill="#fff" />
              <path d="M16 7h7v8" stroke={P} />
              <path d="M21 17v13M15 23h13" stroke="#2f9950" />
            </Svg>
          </ToolButton>
        </ToolGroup>
        <ToolGroup w={72}>
          <ToolButton aria-label="Nova medida">
            <Svg w={24} h={30}>
              <rect x="2" y="2" width="20" height="26" fill="#fff" />
              <path d="M6 5h12v5H6z" fill="#2b88d8" stroke="none" />
              <path d="M6 14h3M11 14h3M16 14h3M6 19h3M11 19h3M16 19h3M6 24h3M11 24h3M16 24h3" strokeWidth="3" />
            </Svg>
          </ToolButton>
        </ToolGroup>
        <ToolGroup w={267} pad={6}>
          <ToolButton disabled gap={11}>
            <Svg w={28} h={30} stroke="#a9cfe6">
              <path d="M14 2H2v26h20V17M5 15l5-4 3 5-5 6zM13 10l4-6 3 5-4 6zM18 3l7 9M21 2l5 6M8 22h6" />
            </Svg>
            Confidencialidade
            <Chevron stroke="#bdbbb9" />
          </ToolButton>
        </ToolGroup>
        <ToolGroup w={162}>
          <ToolButton gap={14}>
            <Svg w={28} h={30}>
              <path d="M10 14V9l2-1h6v6M15 8V2h10v14M18 14H9l-1 2M2 16h9v12H2zM11 28h5V14" />
              <path d="M21 29V15M15 21l6-6 6 6" stroke="#2b88d8" />
            </Svg>
            Publicar
          </ToolButton>
        </ToolGroup>
        <ToolGroup w={71}>
          <ToolButton aria-label="Mais opções">
            <Svg w={28} h={6} stroke="none" fill="#323130">
              <circle cx="3" cy="3" r="2.3" /><circle cx="14" cy="3" r="2.3" /><circle cx="25" cy="3" r="2.3" />
            </Svg>
          </ToolButton>
        </ToolGroup>
        <Collapse aria-label="Recolher"><Chevron w={14} h={9} strokeWidth="3" /></Collapse>
      </ToolRow>
    </Ribbon>

    <Body>
      <Rail>
        <RailButton active aria-label="Relatório">
          <Svg s={24} stroke="#323130"><path d="M2 1v20h21M7 7h3v14M7 7v14M13 11v10h3V11zM19 4h3v17h-3z" /></Svg>
        </RailButton>
        <RailButton aria-label="Tabela">
          <Svg s={24} stroke="#605e5c" strokeWidth="1.6"><path d="M1 1h22v22H1zM1 6h22M1 12h22M1 17h22M8 6v17M16 6v17" /></Svg>
        </RailButton>
        <RailButton aria-label="Modelo">
          <Svg s={28} stroke="#605e5c" strokeWidth="1.8"><path d="M15 2h11v10H15zM15 6h11M15 17h11v10H15zM15 21h11M1 10h10v10H1zM1 14h10M6 10V5h9M6 20v4h9" /></Svg>
        </RailButton>
        <RailButton aria-label="Consulta DAX">
          <Svg s={28} stroke="#605e5c" strokeWidth="1.8">
            <path d="M7 16V4l3-3h7l6 6v8M16 1v7h7M26 8v14l-3 3" />
            <text x="10" y="26" fontSize="11" fontWeight="600" fill="#605e5c" stroke="none" textAnchor="middle">DAX</text>
          </Svg>
        </RailButton>
      </Rail>

      <Center>
        <Report>
          <Side>
            <SlicerPanel>
              {slicers.map((name) => (
                <Slicer key={name}>
                  {name}
                  <Chevron w={15} h={9} stroke="#a19f9d" strokeWidth="1.6" />
                </Slicer>
              ))}
              <Corner top left />
              <Corner top />
              <Corner left />
              <Corner />
              <Handle w={18} h={3} at="top: 1px; left: 126px;" />
              <Handle w={18} h={4} at="bottom: 0; left: 126px;" />
              <Handle w={4} h={18} at="top: 285px; left: -3px;" />
              <Handle w={4} h={18} at="top: 285px; right: -3px;" />
              <VisualHeader>
                <HeaderButton aria-label="Filtros">
                  <Svg s={24} stroke="#757371"><path d="M1 2h22v3l-8 8v10l-5-3v-7L1 5z" /></Svg>
                </HeaderButton>
                <HeaderButton aria-label="Modo de foco">
                  <Svg s={24} stroke="#757371"><path d="M9 3H2v18h20v-7M13 10l9-8M15 2h7v7M2 13h8v8" /></Svg>
                </HeaderButton>
                <HeaderButton aria-label="Mais opções">
                  <Svg w={24} h={4} stroke="none" fill="#605e5c">
                    <circle cx="2" cy="2" r="2" /><circle cx="12" cy="2" r="2" /><circle cx="22" cy="2" r="2" />
                  </Svg>
                </HeaderButton>
              </VisualHeader>
            </SlicerPanel>
            <NavPanel>
              {navItems.map((name) => (
                <NavButton key={name}>{name}</NavButton>
              ))}
            </NavPanel>
            <ClearPanel>
              <ClearButton>Limpar Filtros</ClearButton>
            </ClearPanel>
          </Side>

          <Board>
            <BoardHead>
              <Svg w={46} h={40} stroke="#605e5c" strokeWidth="4">
                <path d="M2 27l9-9 9 8L40 7" />
                <path d="M33 3h11v12z" fill="#605e5c" stroke="none" />
                <path d="M6 39V29M15 39V27M24 39V29M31 39V23M38 39V16" strokeWidth="5" />
                <text x="22" y="17" fontSize="19" fontWeight="700" fill="#605e5c" stroke="none" textAnchor="middle">$</text>
              </Svg>
              <BoardTitle>PRODUTOS</BoardTitle>
            </BoardHead>
            <Frame>
              <Charts>
                <Chart>
                  <ChartTitle>Categorias</ChartTitle>
                  <ChartLegend />
                  <CategoriasChart />
                </Chart>
                <Chart>
                  <ChartTitle>Produtos</ChartTitle>
                  <ChartLegend end />
                  <ProdutosChart />
                </Chart>
              </Charts>
              <GaugeBox>
                <ChartTitle>Meta: Faturado</ChartTitle>
                <GaugeSvg width="500" height="216" viewBox="0 0 500 216">
                  <path d="M84 206a166 167 0 0 1 332 0h-50a116 117 0 0 0-232 0z" fill="#f3f2f1" />
                  <path d="M84 206a166 167 0 0 1 166-167v50a116 117 0 0 0-116 117z" fill="#118dff" />
                  <path d="M269 40l-6 50" stroke="#1a2fa0" strokeWidth="2" />
                  <text x="268" y="34">300.000.000</text>
                  <text x="75" y="205" textAnchor="end">0 Mi</text>
                  <text x="423" y="205">562 Mi</text>
                  <text className="value" x="250" y="194">281 Mi</text>
                </GaugeSvg>
              </GaugeBox>
              <Cards>
                <section>
                  <CardTitle>Produto + Vendido</CardTitle>
                  <CardValue>Câmera Coolpix L340</CardValue>
                </section>
                <section>
                  <CardTitle>Qtd. Vendida</CardTitle>
                </section>
                <section />
                <section>
                  <CardTitle>Total Faturado</CardTitle>
                  <CardValue>R$11.550</CardValue>
                </section>
              </Cards>
            </Frame>
          </Board>
        </Report>

        <PageTabs>
          <Devices>
            <Device active aria-label="Layout da área de trabalho">
              <Svg w={30} h={24} stroke="#605e5c"><path d="M2 2h26v16H2zM15 18v4M10 22h10" /></Svg>
            </Device>
            <Device aria-label="Layout para celular">
              <Svg w={20} h={30} stroke="#605e5c"><rect x="1" y="1" width="18" height="28" rx="2" /><path d="M8 25h4" /></Svg>
            </Device>
            <Arrow aria-label="Anterior">
              <Svg w={8} h={12} fill="#c8c6c4" stroke="none"><path d="M8 0v12L0 6z" /></Svg>
            </Arrow>
            <Arrow aria-label="Próxima">
              <Svg w={8} h={12} fill="#c8c6c4" stroke="none"><path d="M0 0v12l8-6z" /></Svg>
            </Arrow>
          </Devices>
          {pageTabs.map(({ name, w, hidden, active }) => (
            <PageTab key={name} w={w} active={active}>
              {hidden && <HiddenIcon />}
              {name}
            </PageTab>
          ))}
        </PageTabs>
      </Center>

      <Pane w={268}>
        <PaneHead>
          <PaneTitle>Visualizações</PaneTitle>
          <button aria-label="Recolher Visualizações"><Chevrons /></button>
        </PaneHead>
        <Subtitle>Criar visual</Subtitle>
        <Modes>
          <Mode active aria-label="Criar visual">
            <Svg s={38}>
              <path d="M2 5h28" stroke="#757371" strokeWidth="3" />
              <path d="M3 12h32v11H3zM3 27h32v10H3z" fill={green} stroke="#252423" strokeDasharray="3 2" />
            </Svg>
          </Mode>
          <Mode aria-label="Formatar visual">
            <Svg s={34}>
              <path d="M2 28V15h9M11 26V2h9v18M20 10h9" />
              <path d="M32 11L20 26l3 2zM19 26c-4 0-4 6-10 6 5 2 13 2 14-4" fill="#fff" />
            </Svg>
          </Mode>
          <Mode aria-label="Análise">
            <Svg s={36}>
              <circle cx="15" cy="16" r="14" />
              <path d="M1 18l8-6 5 5L27 9M8 27v-8M13 29v-9M18 29v-9M23 26V15" />
              <path d="M25 26l9 9" stroke="#252423" strokeWidth="4" />
            </Svg>
          </Mode>
        </Modes>
        <Notch width="260" height="14" viewBox="0 0 260 14" fill="none" stroke="#a19f9d" strokeWidth="2">
          <path d="M1 13h22L35 1l11 12h214" />
        </Notch>
        <VisualGrid>
          {visuals.map(([name, art]) => (
            <VisualButton key={name} aria-label={name}>
              <Svg strokeWidth="1.8">{art}</Svg>
            </VisualButton>
          ))}
        </VisualGrid>
        <Custom>
          <CustomButton aria-label="Visual personalizado">
            <Svg w={26} h={24}>
              <path d="M0 2h26M0 22h26" stroke={P} />
              <path d="M19 6h6v12h-6z" fill={G} stroke={P} strokeWidth="1" />
              <path d="M3 6h16v12H3z" fill="#323130" stroke="#323130" />
              <path d="M10 9l6 6M16 9l-6 6" stroke="#fff" />
            </Svg>
          </CustomButton>
        </Custom>
        <FieldsTitle>Fields</FieldsTitle>
        <Well>
          {slicers.map((name) => (
            <Field key={name}>
              <span>{name}</span>
              <button aria-label={`Opções de ${name}`}><Chevron w={18} h={10} strokeWidth="1.6" stroke="#605e5c" /></button>
              <button aria-label={`Remover ${name}`}><Cross /></button>
            </Field>
          ))}
        </Well>
        <Subtitle drill>Drill-through</Subtitle>
        <SwitchRow first>
          <span>Relatório cruzado</span>
          <Switch type="checkbox" role="switch" />
        </SwitchRow>
        <SwitchRow>
          <span>Manter todos os filtros</span>
          <Switch type="checkbox" role="switch" defaultChecked />
        </SwitchRow>
        <DropHere>Adicionar os campos de dr...</DropHere>
      </Pane>

      <Pane w={267}>
        <PaneHead>
          <PaneTitle>Dados</PaneTitle>
          <button aria-label="Recolher Dados"><Chevrons /></button>
        </PaneHead>
        <Search>
          <Svg s={22} stroke="#605e5c" strokeWidth="1.8"><circle cx="9" cy="9" r="8" /><path d="M15 15l6 6" /></Svg>
          <input type="text" placeholder="Pesquisar" aria-label="Pesquisar" />
        </Search>
        <Tables>
          {tables.map(({ name, measure, checked }) => (
            <TableItem key={name}>
              <TableButton>
                <Svg w={11} h={18} stroke="#605e5c" strokeWidth="1.8"><path d="M1 1l9 8-9 8" /></Svg>
                {measure ? <CalcIcon /> : <TableIcon checked={checked} />}
                <span>{name}</span>
              </TableButton>
            </TableItem>
          ))}
        </Tables>
      </Pane>
    </Body>

    <Status>
      Página 4 de 8
      <Zoom>
        <SignButton aria-label="Reduzir">-</SignButton>
        <Slider type="range" min="10" max="168" defaultValue="79" aria-label="Zoom" />
        <SignButton aria-label="Ampliar">+</SignButton>
        <Percent>89%</Percent>
        <button aria-label="Ajustar à página">
          <Svg w={25} h={20} stroke="#605e5c">
            <path d="M1 1h23v18H1z" />
            <path d="M5 8V5h4M16 5h4v3M5 12v3h4M16 15h4v-3" strokeWidth="1.5" />
          </Svg>
        </button>
      </Zoom>
    </Status>
    <Edge />

    <Callout
      x={909} y={272} h={298} tall
      d="M698 152L1104 219L669 208A349 149 0 1 1 698 152Z"
    >
      Diferentes bases utilizadas
    </Callout>
    <Callout
      x={448} y={616} h={158}
      d="M157 13L-123 -179L278 2A349 79 0 0 1 698 79A349 79 0 0 1 0 79A349 79 0 0 1 157 13Z"
    >
      Resultado
    </Callout>
    <Callout
      x={929} y={929} h={298} tall
      d="M512 17L789 -84L614 52A349 149 0 1 1 512 17Z"
    >
      Campos escolhidos
    </Callout>
  </Page>
);

export default App;
